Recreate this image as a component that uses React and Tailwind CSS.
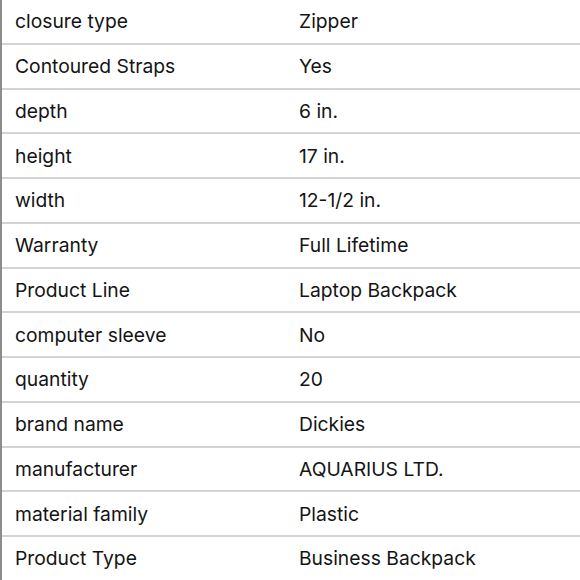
import React from 'react';

const specs = [
  ['closure type', 'Zipper'],
  ['Contoured Straps', 'Yes'],
  ['depth', '6 in.'],
  ['height', '17 in.'],
  ['width', '12-1/2 in.'],
  ['Warranty', 'Full Lifetime'],
  ['Product Line', 'Laptop Backpack'],
  ['computer sleeve', 'No'],
  ['quantity', '20'],
  ['brand name', 'Dickies'],
  ['manufacturer', 'AQUARIUS LTD.'],
  ['material family', 'Plastic'],
  ['Product Type', 'Business Backpack'],
];

export default function App() {
  return (
    <div className="w-[580px] h-[580px] overflow-hidden bg-white font-['Inter','Liberation_Sans',sans-serif] text-[19.3px] text-[#141414]">
      <div className="border-l-2 border-[#8c8c8c]">
        {specs.map(([label, value]) => (
          <div
            key={label}
            className="flex items-center h-[44.75px] pt-[1px] border-b-2 border-[#d4d4d4]"
          >
            <div className="w-[297px] pl-[13px]">{label}</div>
            <div>{value}</div>
          </div>
        ))}
      </div>
    </div>
  );
}
